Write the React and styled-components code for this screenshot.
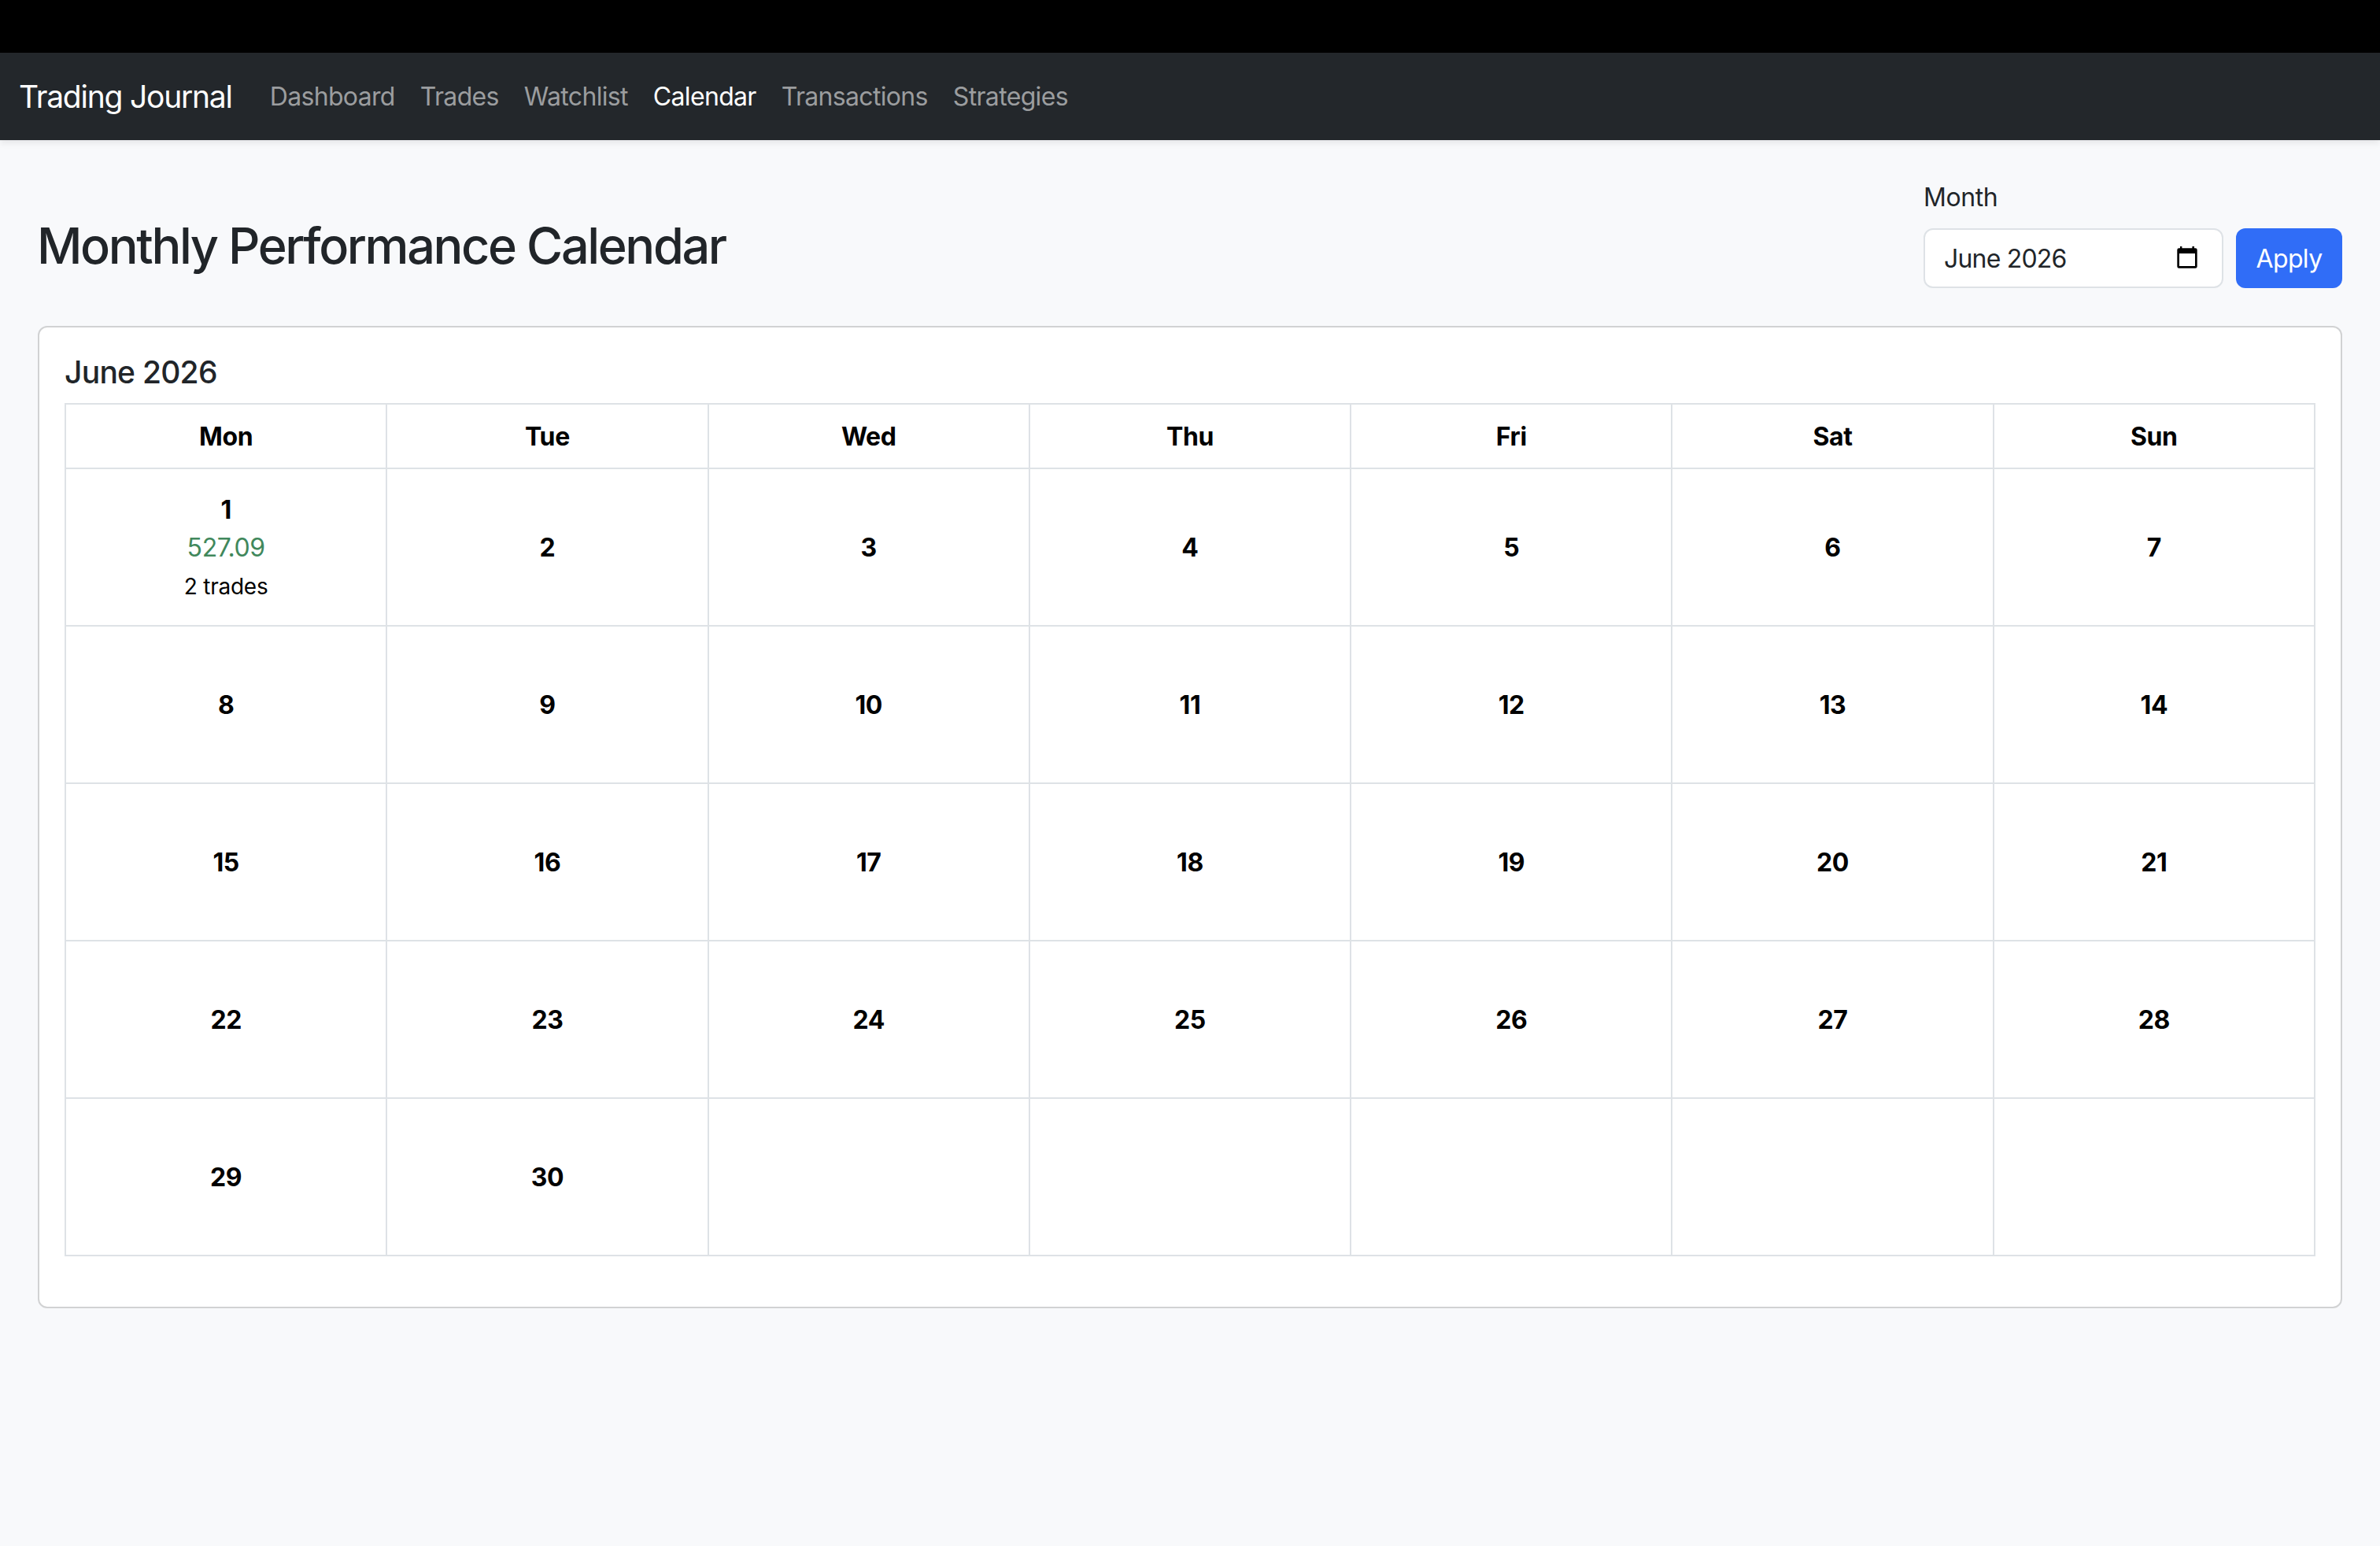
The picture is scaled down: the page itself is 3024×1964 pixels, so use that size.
import React from 'react'
import styled, { createGlobalStyle } from 'styled-components'

const GlobalStyle = createGlobalStyle`
  * {
    box-sizing: border-box;
  }
  body {
    margin: 0;
    background: #f8f9fb;
    color: #212529;
    font-family: Inter, "Liberation Sans", sans-serif;
    font-size: 32px;
    font-weight: 400;
    line-height: 48px;
    letter-spacing: -0.4px;
  }
`

const Page = styled.div`
  min-height: 1964px;
  display: flex;
  flex-direction: column;
`

const TopStrip = styled.div`
  height: 67px;
  background: #000;
`

const Navbar = styled.nav`
  height: 111px;
  display: flex;
  align-items: center;
  padding: 0 24px;
  background: #23272b;
  box-shadow: 0 4px 8px rgba(0, 0, 0, 0.075);
`

const Brand = styled.a`
  margin-right: 32px;
  color: #fff;
  font-size: 39px;
  letter-spacing: -1.23px;
`

const NavLink = styled.a`
  padding: 0 16px;
  color: ${props => (props.$active ? '#fff' : '#9b9d9f')};
  letter-spacing: -0.67px;
`

const Main = styled.main`
  padding: 48px;
`

const PageHead = styled.header`
  display: flex;
  align-items: flex-end;
  justify-content: space-between;
  margin-bottom: 48px;
`

const Title = styled.h2`
  margin: 0 0 16px -1px;
  font-size: 63px;
  font-weight: 500;
  line-height: 76px;
  letter-spacing: -2.39px;
`

const Filter = styled.form`
  display: flex;
  align-items: flex-end;
  gap: 16px;
`

const Label = styled.label`
  display: block;
  padding-top: 1px;
  margin-bottom: 15px;
`

const MonthInput = styled.div`
  width: 381px;
  height: 76px;
  display: flex;
  align-items: center;
  justify-content: space-between;
  padding: 0 27px 0 24px;
  border: 2px solid #dee2e6;
  border-radius: 12px;
  background: #fff;
`

const MonthValue = styled.span`
  padding-top: 2px;
  letter-spacing: -0.8px;
`

const ApplyButton = styled.button`
  width: 135px;
  height: 76px;
  padding: 2px 0 0;
  border: 0;
  border-radius: 12px;
  background: #306df7;
  color: #fff;
  font: inherit;
  letter-spacing: -0.6px;
`

const Card = styled.section`
  padding: 32px;
  border: 2px solid #d1d2d3;
  border-radius: 12px;
  background: #fff;
`

const CardTitle = styled.h5`
  margin: 0 0 15px;
  padding-top: 1px;
  font-size: 39px;
  font-weight: 500;
  line-height: 48px;
  letter-spacing: -0.75px;
`

const Table = styled.table`
  width: 100%;
  margin-bottom: 32px;
  table-layout: fixed;
  border-collapse: collapse;
  color: #000;
  text-align: center;
`

const HeadCell = styled.th`
  height: 82px;
  padding: 2px 0 0;
  border: 2px solid #dee2e6;
  font-weight: 700;
`

const DayCell = styled.td`
  height: 200px;
  padding: 2px 0 0;
  border: 2px solid #dee2e6;
  vertical-align: middle;
`

const DayNumber = styled.div`
  font-weight: 700;
`

const Profit = styled.div`
  color: #41885c;
`

const TradeCount = styled.div`
  padding-top: 1px;
  margin-bottom: -1px;
  font-size: 28px;
  letter-spacing: -0.25px;
`

const links = ['Dashboard', 'Trades', 'Watchlist', 'Calendar', 'Transactions', 'Strategies']
const weekdays = ['Mon', 'Tue', 'Wed', 'Thu', 'Fri', 'Sat', 'Sun']
const weeks = [0, 1, 2, 3, 4]
const results = {
  1: { profit: '527.09', trades: 2 },
}

const CalendarIcon = () => (
  <svg width="32" height="32" viewBox="0 0 32 32">
    <path
      fillRule="evenodd"
      d="M6 1H8.4V3.3H21.4V1H24V3.3H25.4Q27.7 3.3 27.7 5.6V26.4Q27.7 28.7 25.4 28.7H4.6Q2.3 28.7 2.3 26.4V5.6Q2.3 3.3 4.6 3.3H6ZM5 10V26H25V10Z"
    />
  </svg>
)

const Day = ({ day }) => {
  if (day > 30) return <DayCell />
  const result = results[day]
  return (
    <DayCell>
      <DayNumber>{day}</DayNumber>
      {result && <Profit>{result.profit}</Profit>}
      {result && <TradeCount>{result.trades} trades</TradeCount>}
    </DayCell>
  )
}

const App = () => (
  <Page>
    <GlobalStyle />
    <TopStrip />
    <Navbar>
      <Brand>Trading Journal</Brand>
      {links.map(link => (
        <NavLink key={link} $active={link === 'Calendar'}>{link}</NavLink>
      ))}
    </Navbar>
    <Main>
      <PageHead>
        <Title>Monthly Performance Calendar</Title>
        <Filter>
          <div>
            <Label>Month</Label>
            <MonthInput>
              <MonthValue>June 2026</MonthValue>
              <CalendarIcon />
            </MonthInput>
          </div>
          <ApplyButton type="button">Apply</ApplyButton>
        </Filter>
      </PageHead>
      <Card>
        <CardTitle>June 2026</CardTitle>
        <Table>
          <thead>
            <tr>
              {weekdays.map(name => <HeadCell key={name}>{name}</HeadCell>)}
            </tr>
          </thead>
          <tbody>
            {weeks.map(week => (
              <tr key={week}>
                {weekdays.map((name, i) => <Day key={name} day={week * 7 + i + 1} />)}
              </tr>
            ))}
          </tbody>
        </Table>
      </Card>
    </Main>
  </Page>
)

export default App
